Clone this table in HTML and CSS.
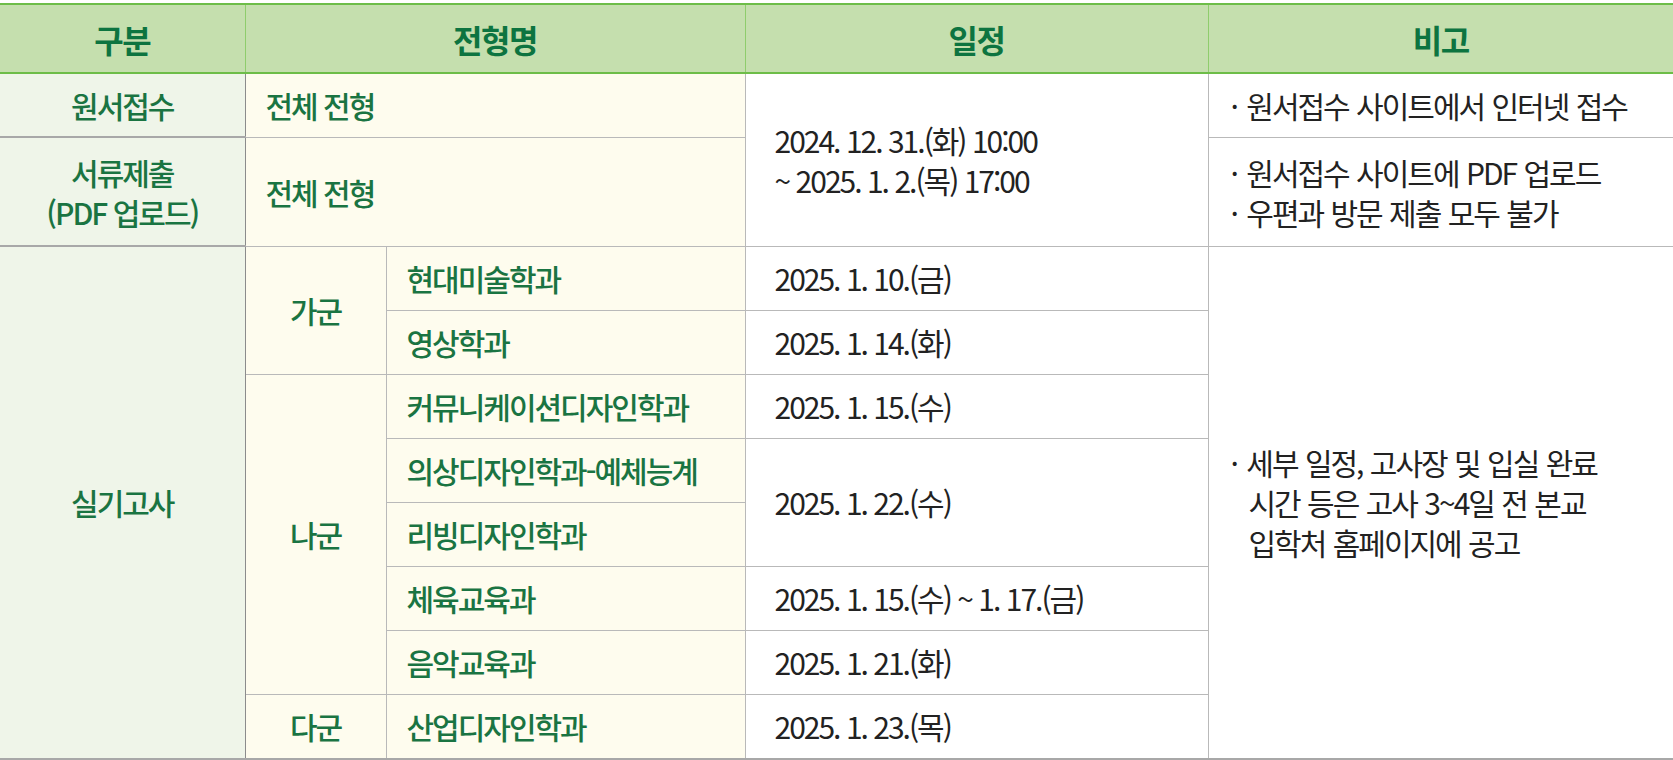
FILE: index.html
```html
<!DOCTYPE html>
<html lang="ko">
<head>
<meta charset="utf-8">
<title>전형 일정</title>
<link rel="stylesheet" href="styles.css">
</head>
<body>
<table class="schedule">
  <colgroup>
    <col class="c-type">
    <col class="c-group">
    <col class="c-dept">
    <col class="c-date">
    <col class="c-note">
  </colgroup>
  <thead>
    <tr class="head-row">
      <th>구분</th>
      <th colspan="2">전형명</th>
      <th>일정</th>
      <th>비고</th>
    </tr>
  </thead>
  <tbody>
    <tr class="r-apply">
      <td class="cat">원서접수</td>
      <td class="name" colspan="2">전체 전형</td>
      <td class="date" rowspan="2">2024. 12. 31.(화) 10:00<br>~ 2025. 1. 2.(목) 17:00</td>
      <td class="note"><p class="item"><span class="dot">·</span> 원서접수 사이트에서 인터넷 접수</p></td>
    </tr>
    <tr class="r-docs">
      <td class="cat">서류제출<br>(PDF 업로드)</td>
      <td class="name" colspan="2">전체 전형</td>
      <td class="note"><p class="item"><span class="dot">·</span> 원서접수 사이트에 PDF 업로드</p><p class="item"><span class="dot">·</span> 우편과 방문 제출 모두 불가</p></td>
    </tr>
    <tr class="r-sub">
      <td class="cat" rowspan="8">실기고사</td>
      <td class="group" rowspan="2">가군</td>
      <td class="name">현대미술학과</td>
      <td class="date">2025. 1. 10.(금)</td>
      <td class="note" rowspan="8"><p class="item"><span class="dot">·</span> 세부 일정, 고사장 및 입실 완료<br>시간 등은 고사 3~4일 전 본교<br>입학처 홈페이지에 공고</p></td>
    </tr>
    <tr class="r-sub">
      <td class="name">영상학과</td>
      <td class="date">2025. 1. 14.(화)</td>
    </tr>
    <tr class="r-sub">
      <td class="group" rowspan="5">나군</td>
      <td class="name">커뮤니케이션디자인학과</td>
      <td class="date">2025. 1. 15.(수)</td>
    </tr>
    <tr class="r-sub">
      <td class="name">의상디자인학과-예체능계</td>
      <td class="date" rowspan="2">2025. 1. 22.(수)</td>
    </tr>
    <tr class="r-sub">
      <td class="name">리빙디자인학과</td>
    </tr>
    <tr class="r-sub">
      <td class="name">체육교육과</td>
      <td class="date">2025. 1. 15.(수) ~ 1. 17.(금)</td>
    </tr>
    <tr class="r-sub">
      <td class="name">음악교육과</td>
      <td class="date">2025. 1. 21.(화)</td>
    </tr>
    <tr class="r-sub">
      <td class="group">다군</td>
      <td class="name">산업디자인학과</td>
      <td class="date">2025. 1. 23.(목)</td>
    </tr>
  </tbody>
</table>
</body>
</html>
```

FILE: styles.css
```css
html, body {
  margin: 0;
  padding: 0;
  background: #ffffff;
}

body {
  padding-top: 3px;
  font-family: "Noto Sans CJK KR", "Noto Sans", sans-serif;
}

.schedule {
  width: 1673px;
  table-layout: fixed;
  border-collapse: collapse;
  font-size: 30px;
  letter-spacing: -2px;
  line-height: 40px;
  color: #222222;
}

.c-type { width: 245px; }
.c-group { width: 141px; }
.c-dept { width: 359px; }
.c-date { width: 463px; }
.c-note { width: 465px; }

.schedule th {
  height: 67px;
  padding: 0;
  background: #c5dfae;
  color: #0d7440;
  font-size: 32px;
  letter-spacing: -1.5px;
  font-weight: 700;
  text-align: center;
  vertical-align: middle;
  border-top: 2px solid #6dbd48;
  border-bottom: 2px solid #6dbd48;
  border-left: 1px solid #8fcd6c;
  border-right: 1px solid #8fcd6c;
}

.schedule th:first-child { border-left: none; }
.schedule th:last-child { border-right: none; }

.schedule td {
  padding: 0;
  vertical-align: middle;
  border: 1px solid #b9b9b9;
}

.schedule tbody tr:last-child td,
.schedule td.cat,
.schedule td.note[rowspan="8"] {
  border-bottom: 2px solid #a8a8a8;
}

.r-apply td { height: 62px; }
.r-docs td { height: 107px; }
.r-sub td { height: 63px; }

.cat {
  background: #eff5e9;
  color: #1a7442;
  font-weight: 500;
  text-align: center;
  border-left: none !important;
  border-right: 1px solid #8c8c8c !important;
}

.group {
  background: #fefcee;
  color: #1a7442;
  font-weight: 500;
  text-align: center;
}

.name {
  background: #fefcee;
  color: #1a7442;
  font-weight: 500;
  padding-left: 20px !important;
}

.date {
  padding-left: 29px !important;
  color: #222222;
}

.note {
  padding-left: 22px !important;
  padding-right: 10px !important;
  border-right: none !important;
  color: #222222;
  word-spacing: 1px;
}

.item {
  margin: 0;
  padding-left: 18px;
  text-indent: -18px;
}

.dot {
  margin-right: 2px;
}
```
